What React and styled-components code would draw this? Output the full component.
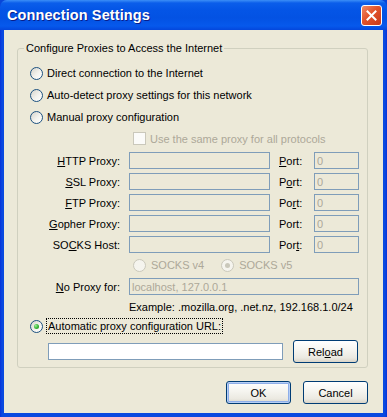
import React from 'react';
import styled, { createGlobalStyle } from 'styled-components';

const GlobalStyle = createGlobalStyle`
  html, body {
    margin: 0;
    padding: 0;
    background: #0846d8;
  }
  body {
    font-family: "Liberation Sans", Arial, sans-serif;
    font-size: 11px;
    color: #000;
  }
`;

const Window = styled.div`
  width: 387px;
  height: 417px;
  display: flex;
  flex-direction: column;
  background: linear-gradient(90deg, #0831d9 0, #0a49e0 2px, #0a49e0 calc(100% - 2px), #0831d9 100%);
  border-radius: 7px 7px 0 0;
  overflow: hidden;
`;

const TitleBar = styled.div`
  height: 30px;
  flex: none;
  display: flex;
  align-items: center;
  justify-content: space-between;
  padding: 0 5px 0 7px;
  background: linear-gradient(180deg, #3c8ff7 0, #0b5eea 3px, #0455e6 10px, #0352e3 18px, #0659ec 26px, #0447dc 30px);
`;

const Title = styled.span`
  font-family: "Liberation Sans", Arial, sans-serif;
  font-weight: bold;
  font-size: 14.5px;
  color: #fff;
  text-shadow: 1px 1px 0 #0a1e8a;
  letter-spacing: 0.1px;
`;

const CloseButton = styled.div`
  width: 21px;
  height: 21px;
  box-sizing: border-box;
  border: 1px solid #fff;
  border-radius: 3px;
  background: linear-gradient(135deg, #f08a66 0%, #e2532b 45%, #c8391a 100%);
  display: flex;
  align-items: center;
  justify-content: center;
`;

const Client = styled.div`
  flex: 1;
  margin: 0 4px 4px;
  background: #ece9d8;
  padding: 11px 15px 0 13px;
  display: flex;
  flex-direction: column;
`;

const Group = styled.fieldset`
  margin: 0;
  padding: 0 0 4px;
  border: 1px solid #d0d0bf;
  border-radius: 3px;
  min-width: 0;
`;

const Legend = styled.legend`
  margin-left: 6px;
  padding: 0 2px;
  line-height: 14px;
`;

const OptionRow = styled.div`
  display: flex;
  align-items: center;
  gap: 4px;
  height: ${(p) => p.$h || 22}px;
  margin-top: ${(p) => p.$mt || 0}px;
  padding-left: ${(p) => p.$indent || 12}px;
  color: ${(p) => (p.$disabled ? '#aca899' : '#000')};
`;

const Radio = styled.span`
  width: 13px;
  height: 13px;
  box-sizing: border-box;
  flex: none;
  border-radius: 50%;
  border: 1px solid ${(p) => (p.$disabled ? '#cac8bb' : '#1c5180')};
  background: ${(p) =>
    p.$disabled ? '#f5f4ee' : 'linear-gradient(135deg, #d6d4cb 0%, #f4f3ee 55%, #ffffff 100%)'};
  display: flex;
  align-items: center;
  justify-content: center;
  &::after {
    content: '';
    display: ${(p) => (p.$checked ? 'block' : 'none')};
    width: 5px;
    height: 5px;
    border-radius: 50%;
    background: ${(p) =>
      p.$disabled ? '#cac8bb' : 'radial-gradient(circle at 35% 35%, #9ff09a 0%, #3cb93a 50%, #1f8a1e 100%)'};
  }
`;

const Checkbox = styled.span`
  width: 13px;
  height: 13px;
  box-sizing: border-box;
  flex: none;
  border: 1px solid #cac8bb;
  background: #fbfbf9;
`;

const FocusLabel = styled.span`
  outline: 1px dotted #000;
  outline-offset: 0;
  padding: 0 1px;
  line-height: 14px;
`;

const FormGrid = styled.div`
  display: grid;
  grid-template-columns: 91px 141px 26px 45px;
  column-gap: 9px;
  row-gap: 4px;
  grid-auto-rows: 17px;
  margin-left: 11px;
  margin-top: ${(p) => p.$mt || 0}px;
  align-items: center;
`;

const FieldLabel = styled.label`
  text-align: ${(p) => (p.$left ? 'left' : 'right')};
  white-space: nowrap;
`;

const Field = styled.input`
  box-sizing: border-box;
  height: 17px;
  width: 100%;
  margin: 0;
  padding: 0 2px;
  border: 1px solid #7f9db9;
  background: ${(p) => (p.disabled ? '#ece9d8' : '#fff')};
  color: #aca899;
  font: 11px "Liberation Sans", Arial, sans-serif;
  grid-column: ${(p) => p.$span || 'auto'};
  &:disabled {
    -webkit-text-fill-color: #aca899;
    opacity: 1;
  }
`;

const Wide = styled.div`
  grid-column: 2 / span 3;
  white-space: nowrap;
  line-height: 14px;
`;

const SocksRow = styled.div`
  display: flex;
  align-items: center;
  height: 20px;
  margin-top: 2px;
  padding-left: 115px;
  color: #aca899;
`;

const SocksOption = styled.span`
  display: flex;
  align-items: center;
  gap: 5px;
  margin-right: ${(p) => p.$mr || 0}px;
`;

const UrlRow = styled.div`
  display: flex;
  align-items: center;
  gap: 10px;
  height: 23px;
  margin-top: 4px;
  padding-left: 30px;
`;

const UrlField = styled(Field)`
  width: 235px;
`;

const Button = styled.button`
  box-sizing: border-box;
  width: ${(p) => p.$w || 65}px;
  height: 23px;
  margin: 0;
  padding: 0;
  border: 1px solid #003c74;
  border-radius: 3px;
  background: linear-gradient(180deg, #ffffff 0%, #f5f4ef 45%, #ebe9e1 80%, #d9d4c8 100%);
  font: 11px "Liberation Sans", Arial, sans-serif;
  color: #000;
  box-shadow: ${(p) => (p.$default ? 'inset 0 0 0 1px #b7cff5, inset 0 0 0 2px #8eaee9' : 'none')};
`;

const ButtonBar = styled.div`
  display: flex;
  justify-content: flex-end;
  gap: 12px;
  margin-top: 13px;
`;

const Key = styled.u`
  text-decoration: underline;
`;

const proxies = [
  { pre: '', key: 'H', post: 'TTP Proxy:', port: ['', 'P', 'ort:'] },
  { pre: '', key: 'S', post: 'SL Proxy:', port: ['P', 'o', 'rt:'] },
  { pre: '', key: 'F', post: 'TP Proxy:', port: ['Po', 'r', 't:'] },
  { pre: '', key: 'G', post: 'opher Proxy:', port: ['Port:', '', ''] },
  { pre: 'SO', key: 'C', post: 'KS Host:', port: ['Por', 't', ':'] },
];

const Accel = ({ parts }) => (
  <>
    {parts[0]}
    {parts[1] && <Key>{parts[1]}</Key>}
    {parts[2]}
  </>
);

export default function App() {
  return (
    <>
      <GlobalStyle />
      <Window>
        <TitleBar>
          <Title>Connection Settings</Title>
          <CloseButton>
            <svg width="11" height="11" viewBox="0 0 11 11">
              <path d="M1.5 1.5 L9.5 9.5 M9.5 1.5 L1.5 9.5" stroke="#fff" strokeWidth="2" strokeLinecap="square" />
            </svg>
          </CloseButton>
        </TitleBar>
        <Client>
          <Group>
            <Legend>Configure Proxies to Access the Internet</Legend>
            <OptionRow $mt={7}>
              <Radio />
              <span>Direct connection to the Internet</span>
            </OptionRow>
            <OptionRow>
              <Radio />
              <span>Auto-detect proxy settings for this network</span>
            </OptionRow>
            <OptionRow>
              <Radio />
              <span>Manual proxy configuration</span>
            </OptionRow>
            <OptionRow $h={21} $indent={115} $disabled>
              <Checkbox />
              <span>Use the same proxy for all protocols</span>
            </OptionRow>

            <FormGrid $mt={3}>
              {proxies.map((p) => (
                <React.Fragment key={p.post}>
                  <FieldLabel>
                    {p.pre}
                    <Key>{p.key}</Key>
                    {p.post}
                  </FieldLabel>
                  <Field disabled readOnly value="" />
                  <FieldLabel $left>
                    <Accel parts={p.port} />
                  </FieldLabel>
                  <Field disabled readOnly value="0" />
                </React.Fragment>
              ))}
            </FormGrid>

            <SocksRow>
              <SocksOption $mr={17}>
                <Radio $disabled />
                SOCKS v4
              </SocksOption>
              <SocksOption>
                <Radio $disabled $checked />
                SOCKS v5
              </SocksOption>
            </SocksRow>

            <FormGrid $mt={3}>
              <FieldLabel>
                <Key>N</Key>o Proxy for:
              </FieldLabel>
              <Field disabled readOnly value="localhost, 127.0.0.1" $span="2 / span 3" />
            </FormGrid>
            <FormGrid $mt={3}>
              <Wide>Example: .mozilla.org, .net.nz, 192.168.1.0/24</Wide>
            </FormGrid>

            <OptionRow $h={20} $mt={1}>
              <Radio $checked />
              <FocusLabel>Automatic proxy configuration URL:</FocusLabel>
            </OptionRow>
            <UrlRow>
              <UrlField readOnly value="" />
              <Button>
                Rel<Key>o</Key>ad
              </Button>
            </UrlRow>
          </Group>
          <ButtonBar>
            <Button $default>OK</Button>
            <Button>Cancel</Button>
          </ButtonBar>
        </Client>
      </Window>
    </>
  );
}
